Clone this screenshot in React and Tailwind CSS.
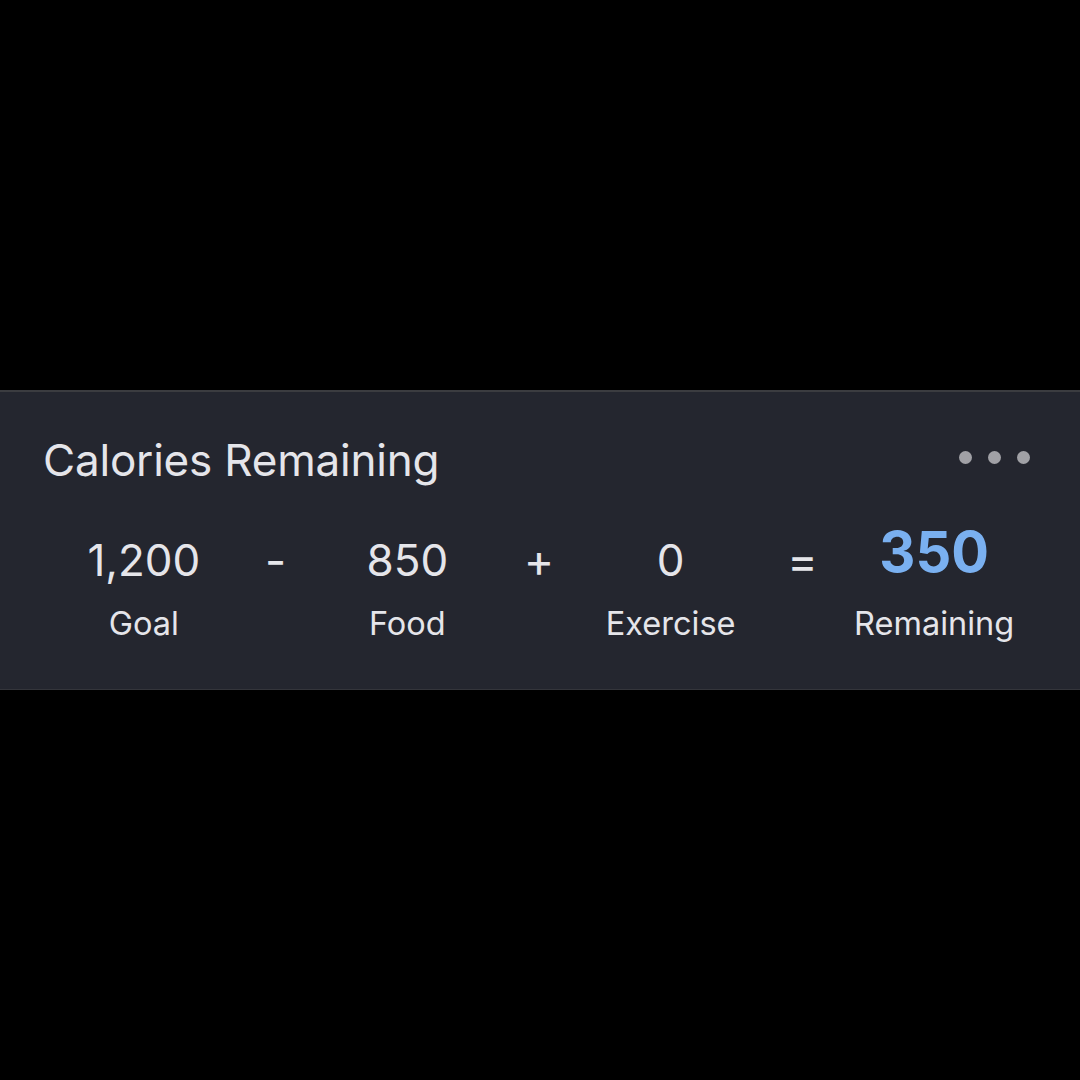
export default function App() {
  const cols = [
    { v: "1,200", l: "Goal" },
    { op: "-" },
    { v: "850", l: "Food" },
    { op: "+" },
    { v: "0", l: "Exercise" },
    { op: "=" },
    { v: "350", l: "Remaining", hi: true },
  ];
  return (
    <div className="w-[1080px] h-[1080px] bg-black flex flex-col justify-center" style={{ fontFamily: "Inter, 'Noto Sans', sans-serif" }}>
      <div className="h-[300px] bg-[#24262f] border-t-2 border-t-[#3b3c40] border-b border-b-[#34353b] flex flex-col">
        <div className="flex items-center justify-between pl-[43px] pr-[50px] pt-[40px]">
          <div className="text-[44px] leading-[56px] text-[#e5e5ea] tracking-[-0.2px]">Calories Remaining</div>
          <div className="flex gap-[16px] mt-[-6px]">
            <span className="w-[13px] h-[13px] rounded-full bg-[#a1a1a6]" />
            <span className="w-[13px] h-[13px] rounded-full bg-[#a1a1a6]" />
            <span className="w-[13px] h-[13px] rounded-full bg-[#a1a1a6]" />
          </div>
        </div>
        <div className="grid grid-cols-7 pl-[78px] pr-[80px] mt-[44px]">
          {cols.map((c, i) =>
            c.op ? (
              <div key={i} className="flex justify-center text-[46px] leading-[56px] text-[#e5e5ea]">{c.op}</div>
            ) : (
              <div key={i} className="flex flex-col items-center">
                <div className={c.hi ? "text-[56px] leading-[56px] font-bold text-[#7ab0f0] mt-[-8px] mb-[8px]" : "text-[44px] leading-[56px] text-[#e5e5ea]"}>{c.v}</div>
                <div className="text-[32.5px] leading-[44px] mt-[14px] text-[#e5e5ea]">{c.l}</div>
              </div>
            )
          )}
        </div>
      </div>
    </div>
  );
}
